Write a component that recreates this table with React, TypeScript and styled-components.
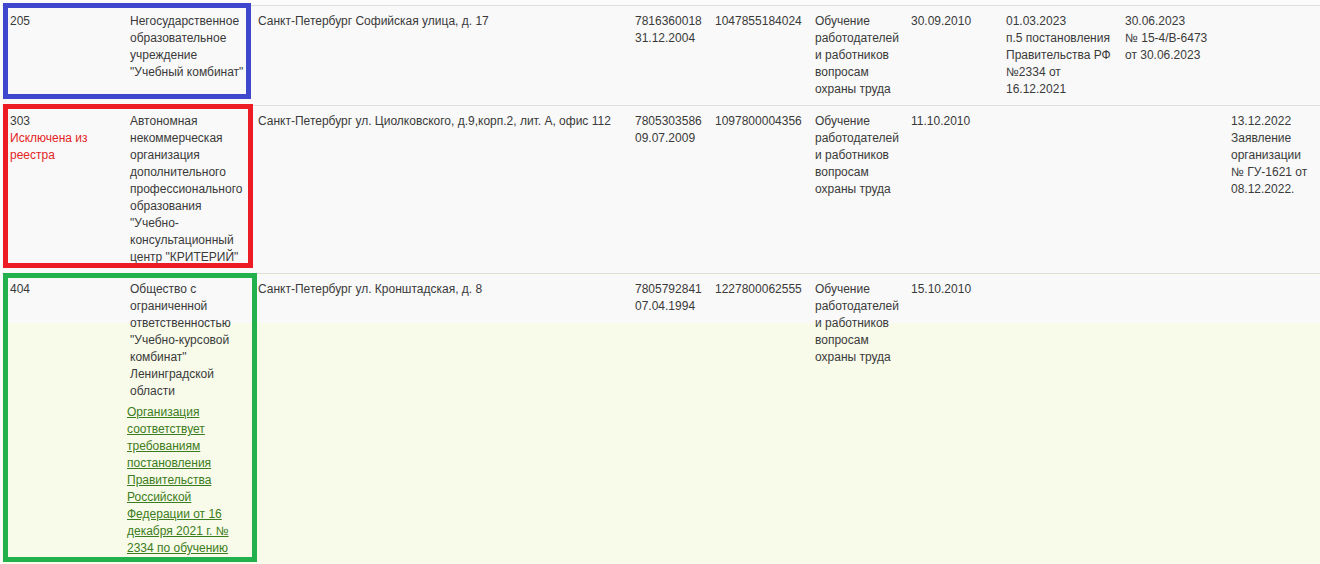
import React from 'react';
import styled, { createGlobalStyle } from 'styled-components';

const GlobalStyle = createGlobalStyle`
  html, body {
    margin: 0;
    padding: 0;
    background: #fcfcfc;
    overflow: hidden;
  }
  body {
    font-family: "Liberation Sans", Arial, sans-serif;
    font-size: 12px;
    color: #3a3a3a;
  }
`;

const Wrap = styled.div`
  position: relative;
  width: 1320px;
  height: 564px;
  overflow: hidden;
  padding: 5px 0 0 2px;
  box-sizing: border-box;
`;

const Table = styled.table`
  border-collapse: collapse;
  table-layout: fixed;
  width: 1318px;
`;

const Row = styled.tr<{ $hover?: boolean }>`
  border-top: 1px solid #dedede;
  background: ${({ $hover }) =>
    $hover ? 'linear-gradient(#f9f9f9 0 48px, #f8fbea 48px)' : '#f9f9f9'};
`;

const Cell = styled.td`
  vertical-align: top;
  padding: 7px 2px 7px 8px;
  line-height: 17px;
  word-wrap: break-word;
`;

const Excluded = styled.div`
  color: #e3241f;
`;

const Note = styled.a`
  display: block;
  width: 112px;
  margin: 4px 0 0 -3px;
  color: #3c7c20;
  text-decoration: underline;
`;

const Mark = styled.div<{ $color: string; $left: number; $top: number; $w: number; $h: number }>`
  position: absolute;
  left: ${({ $left }) => $left}px;
  top: ${({ $top }) => $top}px;
  width: ${({ $w }) => $w}px;
  height: ${({ $h }) => $h}px;
  border: 5px solid ${({ $color }) => $color};
  box-sizing: border-box;
  pointer-events: none;
`;

const widths = [120, 128, 377, 80, 100, 96, 95, 119, 106, 90, 7];

export default function App() {
  return (
    <>
      <GlobalStyle />
      <Wrap>
        <Table>
          <colgroup>
            {widths.map((w, i) => (
              <col key={i} style={{ width: w }} />
            ))}
          </colgroup>
          <tbody>
            <Row>
              <Cell>205</Cell>
              <Cell>Негосударственное образовательное учреждение "Учебный комбинат"</Cell>
              <Cell>Санкт-Петербург Софийская улица, д. 17</Cell>
              <Cell>
                7816360018
                <br />
                31.12.2004
              </Cell>
              <Cell>1047855184024</Cell>
              <Cell>Обучение работодателей и работников вопросам охраны труда</Cell>
              <Cell>30.09.2010</Cell>
              <Cell>
                01.03.2023
                <br />
                п.5 постановления Правительства РФ №2334 от 16.12.2021
              </Cell>
              <Cell>
                30.06.2023
                <br />
                № 15-4/В-6473
                <br />
                от 30.06.2023
              </Cell>
              <Cell></Cell>
              <Cell></Cell>
            </Row>
            <Row>
              <Cell>
                303
                <Excluded>Исключена из реестра</Excluded>
              </Cell>
              <Cell>
                Автономная некоммерческая организация дополнительного профессионального образования
                "Учебно-консультационный центр "КРИТЕРИЙ"
              </Cell>
              <Cell>Санкт-Петербург ул. Циолковского, д.9,корп.2, лит. А, офис 112</Cell>
              <Cell>
                7805303586
                <br />
                09.07.2009
              </Cell>
              <Cell>1097800004356</Cell>
              <Cell>Обучение работодателей и работников вопросам охраны труда</Cell>
              <Cell>11.10.2010</Cell>
              <Cell></Cell>
              <Cell></Cell>
              <Cell>
                13.12.2022
                <br />
                Заявление организации № ГУ-1621 от 08.12.2022.
              </Cell>
              <Cell></Cell>
            </Row>
            <Row $hover>
              <Cell>404</Cell>
              <Cell>
                Общество с ограниченной ответственностью "Учебно-курсовой комбинат" Ленинградской
                области
                <Note href="#">
                  Организация соответствует требованиям постановления Правительства Российской
                  Федерации от 16 декабря 2021 г. № 2334 по обучению
                </Note>
              </Cell>
              <Cell>Санкт-Петербург ул. Кронштадская, д. 8</Cell>
              <Cell>
                7805792841
                <br />
                07.04.1994
              </Cell>
              <Cell>1227800062555</Cell>
              <Cell>Обучение работодателей и работников вопросам охраны труда</Cell>
              <Cell>15.10.2010</Cell>
              <Cell></Cell>
              <Cell></Cell>
              <Cell></Cell>
              <Cell></Cell>
            </Row>
          </tbody>
        </Table>
        <Mark $color="#3f48cc" $left={3} $top={3} $w={248} $h={96} />
        <Mark $color="#ed1c24" $left={3} $top={104} $w={250} $h={164} />
        <Mark $color="#22b14c" $left={3} $top={273} $w={254} $h={289} />
      </Wrap>
    </>
  );
}
